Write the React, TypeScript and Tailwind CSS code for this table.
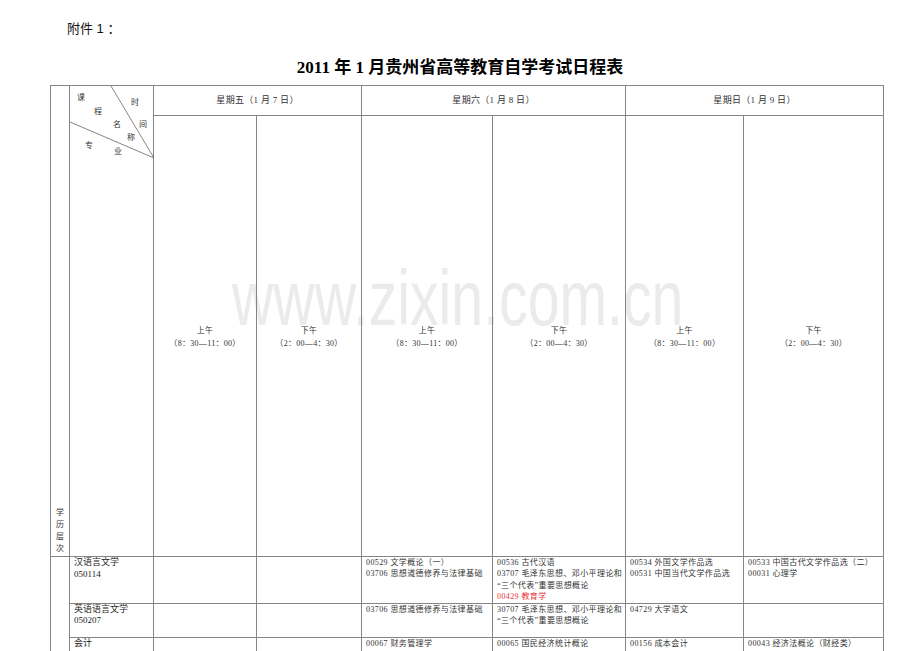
const serif = "font-['Liberation_Serif','Noto_Sans_CJK_SC',serif]";

const cell = "border border-[#858585] p-0";

type Row = {
  major: string[];
  h: string;
  cols: (string | { red: string })[][];
};

const rows: Row[] = [
  {
    major: ["汉语言文学", "050114"],
    h: "h-[46px]",
    cols: [
      [],
      [],
      ["00529 文学概论（一）", "03706 思想道德修养与法律基础"],
      ["00536 古代汉语", "03707 毛泽东思想、邓小平理论和", "“三个代表”重要思想概论", { red: "00429 教育学" }],
      ["00534 外国文学作品选", "00531 中国当代文学作品选"],
      ["00533 中国古代文学作品选（二）", "00031 心理学"],
    ],
  },
  {
    major: ["英语语言文学", "050207"],
    h: "h-[34px]",
    cols: [
      [],
      [],
      ["03706 思想道德修养与法律基础"],
      ["30707 毛泽东思想、邓小平理论和", "“三个代表”重要思想概论"],
      ["04729 大学语文"],
      [],
    ],
  },
  {
    major: ["会计"],
    h: "h-[46px]",
    cols: [
      [],
      [],
      ["00067 财务管理学"],
      ["00065 国民经济统计概论"],
      ["00156 成本会计"],
      ["00043 经济法概论（财经类）"],
    ],
  },
];

const corner: [string, number, number][] = [
  ["课", 11, 12],
  ["时", 65, 17],
  ["程", 28, 26],
  ["名", 47, 39],
  ["间", 73, 39],
  ["称", 61, 52],
  ["专", 19, 60],
  ["业", 48, 66],
];

function Slot({ half, time }: { half: string; time: string }) {
  return (
    <td className={`${cell} align-middle text-center`}>
      <div className="text-[8px] leading-[13px] tracking-[0.3px] text-[#333] pt-[1px]">
        <div>{half}</div>
        <div>{time}</div>
      </div>
    </td>
  );
}

export default function App() {
  return (
    <div className={`relative h-[651px] w-[920px] overflow-hidden bg-white ${serif}`}>
      {/* watermark */}
      <div className="pointer-events-none absolute left-[232px] top-[260px] origin-left scale-x-[0.743] whitespace-nowrap font-['Liberation_Sans',sans-serif] text-[77px] leading-[77px] text-[#ebebeb]">
        www.zixin.com.cn
      </div>

      <div className="relative pt-[21px]">
        <p className="pl-[67px] font-['Liberation_Sans','Noto_Sans_CJK_SC',sans-serif] text-[13px] leading-[16px] text-[#111]">
          附件 1 ：
        </p>
        <h1 className="mt-[20px] text-center text-[17px] font-bold leading-[22px] text-black">
          2011 年 1 月贵州省高等教育自学考试日程表
        </h1>

        <table className="mt-[6px] ml-[50px] w-[833px] table-fixed border-collapse text-[#333]">
          <colgroup>
            <col className="w-[19px]" />
            <col className="w-[84px]" />
            <col className="w-[103px]" />
            <col className="w-[105px]" />
            <col className="w-[131px]" />
            <col className="w-[133px]" />
            <col className="w-[118px]" />
            <col className="w-[140px]" />
          </colgroup>
          <tbody>
            <tr className="h-[30px]">
              <td rowSpan={2} className={`${cell} align-bottom`}>
                <div className="flex flex-col items-center pb-[1px] text-[8px] leading-[12px]">
                  <span>学</span>
                  <span>历</span>
                  <span>层</span>
                  <span>次</span>
                </div>
              </td>
              <td rowSpan={2} className={`${cell} align-top`}>
                <div className="relative h-[72px] w-full">
                  <svg className="absolute left-0 top-0" width="84" height="72" viewBox="0 0 84 72">
                    <line x1="41" y1="0" x2="84" y2="72" stroke="#666" strokeWidth="0.8" />
                    <line x1="0" y1="36" x2="84" y2="72" stroke="#666" strokeWidth="0.8" />
                  </svg>
                  {corner.map(([c, x, y]) => (
                    <span
                      key={c}
                      className="absolute -translate-x-1/2 -translate-y-1/2 text-[8px] leading-[8px]"
                      style={{ left: x, top: y }}
                    >
                      {c}
                    </span>
                  ))}
                </div>
              </td>
              <td colSpan={2} className={`${cell} align-middle text-center text-[9px] tracking-[0.3px]`}>
                星期五（1 月 7 日）
              </td>
              <td colSpan={2} className={`${cell} align-middle text-center text-[9px] tracking-[0.3px]`}>
                星期六（1 月 8 日）
              </td>
              <td colSpan={2} className={`${cell} align-middle text-center text-[9px] tracking-[0.3px]`}>
                星期日（1 月 9 日）
              </td>
            </tr>
            <tr className="h-[441px]">
              <Slot half="上午" time="（8：30—11：00）" />
              <Slot half="下午" time="（2：00—4：30）" />
              <Slot half="上午" time="（8：30—11：00）" />
              <Slot half="下午" time="（2：00—4：30）" />
              <Slot half="上午" time="（8：30—11：00）" />
              <Slot half="下午" time="（2：00—4：30）" />
            </tr>
            {rows.map((r, i) => (
              <tr key={i} className={r.h}>
                {i === 0 && <td rowSpan={rows.length} className={`${cell} align-top`} />}
                <td className={`${cell} align-top`}>
                  <div className="px-[4px] text-[9px] leading-[11.5px] text-[#222]">
                    {r.major.map((m) => (
                      <div key={m}>{m}</div>
                    ))}
                  </div>
                </td>
                {r.cols.map((lines, j) => (
                  <td key={j} className={`${cell} align-top`}>
                    <div className="px-[4px] text-[8px] leading-[11.4px] tracking-[0.4px] whitespace-nowrap">
                      {lines.map((l, k) =>
                        typeof l === "string" ? (
                          <div key={k}>{l}</div>
                        ) : (
                          <div key={k} className="text-[#e8353a]">
                            {l.red}
                          </div>
                        )
                      )}
                    </div>
                  </td>
                ))}
              </tr>
            ))}
          </tbody>
        </table>
      </div>
    </div>
  );
}
